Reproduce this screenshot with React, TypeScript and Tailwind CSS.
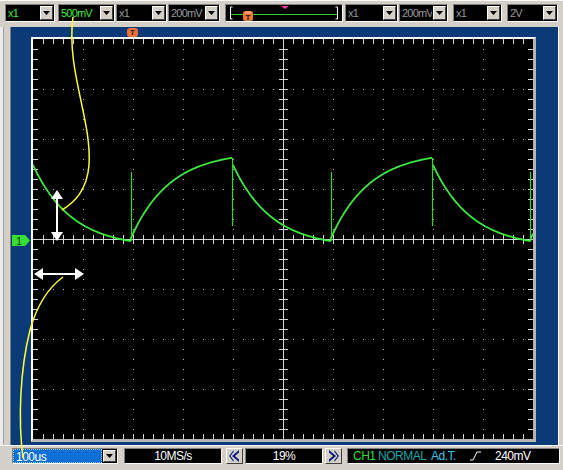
import cn from "clsx";

// Scope capture: 10 x 8 divisions, 50px each, ticks every 10px.
const TAU = 38.7;

function traceY(x: number) {
  const p = (((x - 98) % 200) + 200) % 200;
  if (p <= 101) return 199 - 86.5 * (1 - Math.exp(-p / TAU));
  const t = p - 102;
  return 126 + (76 * (1 - Math.exp(-t / TAU))) / (1 - Math.exp(-97 / TAU));
}

function tracePath() {
  let d = "";
  let prev: number | null = null;
  for (let x = 0; x <= 500; x += 1) {
    const y = traceY(x);
    const jump = prev === null || Math.abs(y - prev) > 6;
    d += `${jump ? "M" : "L"}${x},${y.toFixed(1)}`;
    prev = y;
  }
  return d;
}

const TRACE = tracePath();
const range = (n: number) => Array.from({ length: n }, (_, i) => i + 1);

function DropButton() {
  return (
    <div className="m-[1px] flex w-[13px] shrink-0 items-center justify-center border border-t-white border-l-white border-r-[#404040] border-b-[#404040] bg-[#d4d0c8]">
      <svg width="7" height="4" viewBox="0 0 7 4">
        <path d="M0 0h7L3.5 4z" fill="#000" />
      </svg>
    </div>
  );
}

function Combo({ text, tone = "text-[#9a9a9a]", className }: { text: string; tone?: string; className?: string }) {
  return (
    <div className={cn("flex h-[18px] border border-t-[#808080] border-l-[#808080] border-r-white border-b-white bg-black", className)}>
      <div className={cn("flex-1 overflow-hidden whitespace-nowrap pl-[2px] text-[11px] leading-[16px] tracking-[-0.8px]", tone)}>{text}</div>
      <DropButton />
    </div>
  );
}

function Slider() {
  return (
    <div className="ml-[5px] h-[18px] w-[118px] border border-t-[#808080] border-l-[#808080] border-r-white border-b-white bg-black">
      <svg width="116" height="16" viewBox="0 0 116 16">
        <path d="M4.5 2v12M4.5 2h2M4.5 14h2M111.5 2v12M111.5 2h-2M111.5 14h-2" stroke="#fff" strokeWidth="1" fill="none" />
        <path d="M5 9.5h106" stroke="#2fcf2f" strokeWidth="1" />
        <path d="M55 1h8l-4 3z" fill="#ff3ca8" />
        <rect x="17" y="6" width="10" height="10" rx="2.5" fill="#e8743a" />
        <ellipse cx="22" cy="7.5" rx="4" ry="1.3" fill="#f4a070" />
        <text x="22" y="14.5" textAnchor="middle" fontSize="8" fontWeight="700" fill="#3a1a08" fontFamily="Liberation Sans, Arial, sans-serif">T</text>
      </svg>
    </div>
  );
}

function NavButton({ dir }: { dir: "left" | "right" }) {
  return (
    <div className="flex h-[16px] w-[17px] items-center justify-center border border-t-white border-l-white border-r-[#404040] border-b-[#404040] bg-[#d4d0c8]">
      <svg width="11" height="12" viewBox="0 0 11 12">
        {dir === "left" ? (
          <>
            <path d="M10 0L3 6l7 6V9.5L6 6l4-3.5z" fill="#0a1a78" />
            <path d="M4.5 1L0.8 6l3.7 5" stroke="#0a1a78" strokeWidth="1.2" fill="none" />
          </>
        ) : (
          <>
            <path d="M1 0l7 6-7 6V9.5L5 6 1 2.5z" fill="#0a1a78" />
            <path d="M6.5 1l3.7 5-3.7 5" stroke="#0a1a78" strokeWidth="1.2" fill="none" />
          </>
        )}
      </svg>
    </div>
  );
}

function Plot() {
  const divX = [1, 2, 3, 4, 6, 7, 8, 9];
  const divY = [1, 2, 3, 5, 6, 7];
  return (
    <svg width="500" height="400" viewBox="0 0 500 400" className="block bg-black">
      <g shapeRendering="crispEdges" strokeWidth="1">
        {divX.map((k) => (
          <line key={`vx${k}`} x1={50 * k + 0.5} y1="10" x2={50 * k + 0.5} y2="400" stroke="#bdbdbd" strokeDasharray="1 9" />
        ))}
        {divY.map((k) => (
          <line key={`hy${k}`} x1="10" y1={50 * k + 0.5} x2="500" y2={50 * k + 0.5} stroke="#bdbdbd" strokeDasharray="1 9" />
        ))}
        <line x1="250.5" y1="0" x2="250.5" y2="400" stroke="#d6d6d6" />
        <line x1="0" y1="200.5" x2="500" y2="200.5" stroke="#d6d6d6" />
        {range(49).map((j) => (
          <g key={`tx${j}`} stroke="#d6d6d6">
            <line x1={10 * j + 0.5} y1="196" x2={10 * j + 0.5} y2="205" />
            <line x1={10 * j + 0.5} y1="0" x2={10 * j + 0.5} y2="5" />
            <line x1={10 * j + 0.5} y1="395" x2={10 * j + 0.5} y2="400" />
          </g>
        ))}
        {range(39).map((j) => (
          <g key={`ty${j}`} stroke="#d6d6d6">
            <line x1="246" y1={10 * j + 0.5} x2="255" y2={10 * j + 0.5} />
            <line x1="0" y1={10 * j + 0.5} x2="5" y2={10 * j + 0.5} />
            <line x1="495" y1={10 * j + 0.5} x2="500" y2={10 * j + 0.5} />
          </g>
        ))}
      </g>
      <g stroke="#33d433" strokeWidth="1.2">
        <line x1="98.5" y1="202" x2="98.5" y2="133" />
        <line x1="298.5" y1="202" x2="298.5" y2="133" />
        <line x1="497.5" y1="202" x2="497.5" y2="133" />
        <line x1="199.5" y1="119" x2="199.5" y2="187" />
        <line x1="399.5" y1="119" x2="399.5" y2="187" />
      </g>
      <path d={TRACE} fill="none" stroke="#3ee83e" strokeWidth="1.8" strokeLinejoin="round" />
    </svg>
  );
}

export default function App() {
  return (
    <div className="relative h-[470px] w-[563px] overflow-hidden bg-[#d4d0c8] font-['Liberation_Sans',Arial,sans-serif]">
      {/* channel / timebase toolbar */}
      <div className="flex h-[27px] items-start border-t border-white pl-[5px] pt-[3px]">
        <Combo text="x1" tone="text-[#3ee83e]" className="w-[50px]" />
        <Combo text="500mV" tone="text-[#3ee83e]" className="ml-[3px] w-[57px]" />
        <Combo text="x1" className="ml-[1px] w-[51px]" />
        <Combo text="200mV" className="ml-[1px] w-[52px]" />
        <Slider />
        <Combo text="x1" className="ml-[2px] w-[53px]" />
        <Combo text="200mV" className="ml-[1px] w-[49px]" />
        <Combo text="x1" className="ml-[5px] w-[49px]" />
        <Combo text="2V" className="ml-[5px] w-[51px]" />
      </div>

      {/* screen */}
      <div className="flex h-[418px]">
        <div className="flex w-[11px] shrink-0">
          <div className="w-[3px] bg-[#ececec]" />
          <div className="w-[1px] bg-[#a0a0a0]" />
          <div className="flex-1 border-r border-[#808080]" />
        </div>
        <div className="flex-1 bg-[#0b3b77] pl-[20px] pt-[10px]">
          <div className="w-fit border-t-2 border-l-2 border-r-[3px] border-b-[3px] border-t-white border-l-white border-r-[#b4b4b4] border-b-[#b4b4b4]">
            <Plot />
          </div>
        </div>
        <div className="w-[5px] shrink-0 border-l border-white" />
      </div>

      {/* status bar */}
      <div className="flex h-[25px] items-start border-t border-white pl-[12px] pt-[2px] text-[12px] leading-[14px] tracking-[-0.5px]">
        <div className="flex h-[16px] w-[106px] border border-t-[#808080] border-l-[#808080] border-r-white border-b-white bg-black">
          <div className="flex-1 border border-dotted border-[#9fc8f0] bg-[#0e6fd6] pl-[2px] text-white">100us</div>
          <DropButton />
        </div>
        <div className="ml-[6px] h-[16px] w-[98px] border border-t-[#808080] border-l-[#808080] border-r-white border-b-white bg-black text-center text-white">
          10MS/s
        </div>
        <div className="ml-[4px]">
          <NavButton dir="left" />
        </div>
        <div className="ml-[2px] h-[16px] w-[78px] border border-t-[#808080] border-l-[#808080] border-r-white border-b-white bg-black text-center text-white">
          19%
        </div>
        <div className="ml-[2px]">
          <NavButton dir="right" />
        </div>
        <div className="ml-[5px] flex h-[16px] w-[213px] items-center whitespace-nowrap border border-t-[#808080] border-l-[#808080] border-r-white border-b-white bg-black pl-[5px]">
          <span className="w-[25px] text-[#33dd33]">CH1</span>
          <span className="w-[53px] text-[#1fa6a6]">NORMAL</span>
          <span className="w-[39px] text-[#44c4e8]">Ad.T.</span>
          <span className="w-[25px]">
            <svg width="11" height="10" viewBox="0 0 11 10" className="block">
              <path d="M0 9h3L7 1h4" stroke="#fff" strokeWidth="1" fill="none" />
            </svg>
          </span>
          <span className="text-white">240mV</span>
        </div>
      </div>

      {/* channel 1 ground marker */}
      <svg className="absolute left-[11px] top-[235px]" width="20" height="11" viewBox="0 0 20 11">
        <path d="M1 0h13l5 5.5-5 5.5H1z" fill="#33e033" />
        <text x="8" y="9.5" textAnchor="middle" fontSize="10" fill="#063806" fontFamily="Liberation Sans, Arial, sans-serif">1</text>
      </svg>

      {/* trigger position marker */}
      <div className="absolute left-[127px] top-[28px] flex h-[9px] w-[11px] items-center justify-center rounded-[3px] bg-[#e8743a] text-[8px] font-bold leading-none text-[#3a1a08]">
        T
      </div>

      {/* annotation overlay */}
      <svg className="pointer-events-none absolute inset-0" width="563" height="470" viewBox="0 0 563 470">
        <g stroke="#ffff33" strokeWidth="1.5" fill="none">
          <path d="M73 17C66 70 92 120 89 165C87 190 75 202 62 210" />
          <path d="M23 458C18 420 20 370 30 330C37 305 48 288 63 277" />
        </g>
        <g stroke="#fff" strokeWidth="2" fill="#fff">
          <line x1="57" y1="196" x2="57" y2="234" />
          <path d="M57 190l-6 9h12z" stroke="none" />
          <path d="M57 241l-6-9h12z" stroke="none" />
          <line x1="40" y1="274" x2="78" y2="274" />
          <path d="M34 274l9-6v12z" stroke="none" />
          <path d="M84 274l-9-6v12z" stroke="none" />
        </g>
      </svg>
    </div>
  );
}
